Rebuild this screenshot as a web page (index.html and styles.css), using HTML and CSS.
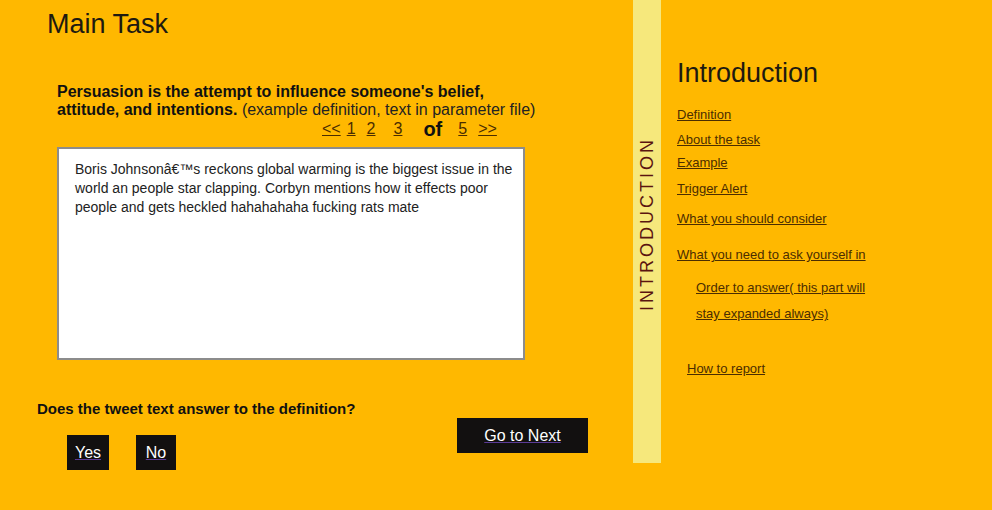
FILE: index.html
```html
<!DOCTYPE html>
<html lang="en">
<head>
<meta charset="utf-8">
<title>Main Task</title>
<link rel="stylesheet" href="styles.css">
</head>
<body>
<div class="page">
  <main class="task">
    <h1 class="task-title">Main Task</h1>
    <p class="definition"><b>Persuasion is the attempt to influence someone's belief,</b><br><b>attitude, and intentions.</b> (example definition, text in parameter file)</p>
    <div class="pager">
      <a href="#" class="pg pg-prev">&lt;&lt;</a>
      <a href="#" class="pg pg-1">1</a>
      <a href="#" class="pg pg-2">2</a>
      <a href="#" class="pg pg-3">3</a>
      <span class="pg-of">of</span>
      <a href="#" class="pg pg-5">5</a>
      <a href="#" class="pg pg-next">&gt;&gt;</a>
    </div>
    <div class="tweet">Boris Johnsonâ€™s reckons global warming is the biggest issue in the world an people star clapping. Corbyn mentions how it effects poor people and gets heckled hahahahaha fucking rats mate</div>
    <div class="answer-row">
      <div class="answer">
        <p class="question">Does the tweet text answer to the definition?</p>
        <div class="choices">
          <a href="#" class="btn btn-yes">Yes</a>
          <a href="#" class="btn btn-no">No</a>
        </div>
      </div>
      <a href="#" class="btn btn-next">Go to Next</a>
    </div>
  </main>
  <div class="strip"><span class="strip-label">INTRODUCTION</span></div>
  <aside class="intro">
    <h2 class="intro-title">Introduction</h2>
    <a href="#" class="ilink l-def">Definition</a>
    <a href="#" class="ilink l-about">About the task</a>
    <a href="#" class="ilink l-ex">Example</a>
    <a href="#" class="ilink l-trig">Trigger Alert</a>
    <a href="#" class="ilink l-should">What you should consider</a>
    <a href="#" class="ilink l-need">What you need to ask yourself in</a>
    <a href="#" class="ilink l-order">Order to answer( this part will</a>
    <a href="#" class="ilink l-stay">stay expanded always)</a>
    <a href="#" class="ilink l-how">How to report</a>
  </aside>
</div>
</body>
</html>
```

FILE: styles.css
```css
html, body {
  margin: 0;
  padding: 0;
}
body {
  background: #ffb800;
  font-family: "Liberation Sans", Arial, sans-serif;
  color: #1e1a10;
  width: 992px;
  height: 510px;
  overflow: hidden;
}
.page {
  display: flex;
  align-items: flex-start;
}
.task {
  width: 633px;
  flex: none;
}
.task-title {
  margin: 9px 0 0 47px;
  font-size: 27px;
  line-height: 31px;
  font-weight: normal;
  color: #1e1a10;
}
.definition {
  margin: 43px 0 0 57px;
  width: 486px;
  font-size: 16px;
  line-height: 18px;
  color: #222;
}
.definition b {
  color: #111;
}
.pager {
  display: flex;
  align-items: flex-start;
  margin: 1px 0 0 322px;
  font-size: 16px;
  line-height: 18px;
  height: 18px;
}
.pg {
  color: #4b2d00;
  text-decoration: underline;
}
.pg-1 { margin-left: 6px; }
.pg-2 { margin-left: 11px; }
.pg-3 { margin-left: 18px; }
.pg-of {
  margin-left: 21px;
  font-size: 20px;
  line-height: 18px;
  font-weight: bold;
  color: #111;
}
.pg-5 { margin-left: 16px; }
.pg-next { margin-left: 11px; }
.tweet {
  margin: 9px 0 0 57px;
  width: 468px;
  height: 213px;
  box-sizing: border-box;
  border: 2px solid #8c8c8c;
  background: #fff;
  padding: 11px 6px 0 16px;
  font-size: 14px;
  line-height: 19px;
  color: #222;
}
.answer-row {
  display: flex;
  align-items: flex-start;
  margin: 41px 0 0 37px;
}
.answer {
  width: 420px;
  flex: none;
}
.question {
  margin: 0;
  font-size: 15px;
  line-height: 16px;
  font-weight: bold;
  color: #111;
}
.choices {
  display: flex;
  margin-top: 18px;
}
.btn {
  display: block;
  background: #121010;
  color: #fff;
  font-size: 16px;
  line-height: 35px;
  height: 35px;
  text-align: center;
  text-decoration: underline;
  text-decoration-color: #5b3a96;
}
.btn-yes {
  margin-left: 30px;
  width: 42px;
}
.btn-no {
  margin-left: 27px;
  width: 40px;
}
.btn-next {
  margin-top: 17px;
  width: 131px;
}
.strip {
  width: 28px;
  height: 463px;
  flex: none;
  background: #f6e87c;
  display: flex;
  align-items: center;
  justify-content: center;
}
.strip-label {
  writing-mode: vertical-rl;
  transform: rotate(180deg);
  font-size: 18px;
  letter-spacing: 3px;
  color: #5a1410;
  margin-bottom: 16px;
}
.intro {
  display: flex;
  flex-direction: column;
  align-items: flex-start;
  padding-left: 16px;
}
.intro-title {
  margin: 58px 0 0 0;
  font-size: 27px;
  line-height: 31px;
  font-weight: normal;
  color: #1e1a10;
}
.ilink {
  display: block;
  font-size: 13px;
  line-height: 15px;
  color: #4b2d00;
  text-decoration: underline;
}
.l-def { margin-top: 18px; }
.l-about { margin-top: 10px; }
.l-ex { margin-top: 8px; }
.l-trig { margin-top: 11px; }
.l-should { margin-top: 15px; }
.l-need { margin-top: 21px; }
.l-order { margin-top: 18px; margin-left: 19px; }
.l-stay { margin-top: 11px; margin-left: 19px; }
.l-how { margin-top: 40px; margin-left: 10px; }
```
